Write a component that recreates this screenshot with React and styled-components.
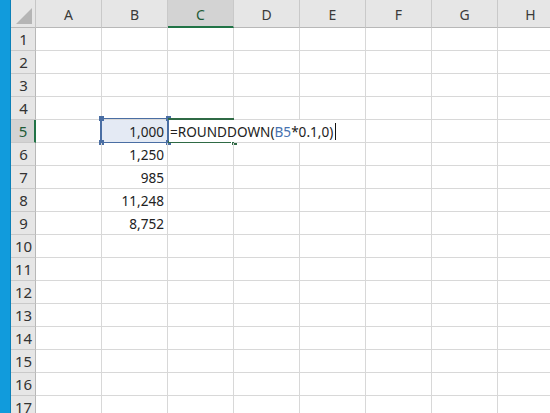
import React from "react";
import styled, { createGlobalStyle } from "styled-components";

const Global = createGlobalStyle`
  html, body { margin: 0; padding: 0; background: #fff; overflow: hidden; }
  body { font-family: "Noto Sans", "Noto Sans CJK JP", sans-serif; }
`;

const COLS = ["A", "B", "C", "D", "E", "F", "G", "H"];
const ROWS = Array.from({ length: 17 }, (_, i) => i + 1);

const data = { 5: "1,000", 6: "1,250", 7: "985", 8: "11,248", 9: "8,752" };

const Page = styled.div`
  display: flex;
  width: 550px;
  height: 413px;
  overflow: hidden;
`;

const Strip = styled.div`
  width: 10px;
  flex: none;
  background: #119bdc;
  border-right: 1px solid #0b80b8;
`;

const Sheet = styled.div`
  display: grid;
  grid-template-columns: 25px repeat(8, 66px);
  grid-template-rows: 28px repeat(17, 23px);
  flex: none;
  background: #fff;
`;

const Corner = styled.div`
  background: #e6e6e6;
  border-right: 1px solid #c6c6c6;
  border-bottom: 1px solid #b8b8b8;
  display: flex;
  align-items: flex-end;
  justify-content: flex-end;
  padding: 0 3px 3px 0;
  &::after {
    content: "";
    border-left: 16px solid transparent;
    border-bottom: 16px solid #b5b5b5;
  }
`;

const ColHead = styled.div`
  box-sizing: border-box;
  background: ${(p) => (p.$active ? "#d3d3d3" : "#e6e6e6")};
  border-right: 1px solid #c9c9c9;
  border-bottom: ${(p) => (p.$active ? "2px solid #217346" : "1px solid #b8b8b8")};
  display: flex;
  align-items: center;
  justify-content: center;
  color: ${(p) => (p.$active ? "#1e5b36" : "#3a3a3a")};
  font-size: 14px;
  padding-top: 2px;
`;

const RowHead = styled.div`
  box-sizing: border-box;
  background: ${(p) => (p.$active ? "#d3d3d3" : "#e6e6e6")};
  border-right: ${(p) => (p.$active ? "2px solid #217346" : "1px solid #b8b8b8")};
  border-bottom: 1px solid #c9c9c9;
  display: flex;
  align-items: center;
  justify-content: center;
  color: ${(p) => (p.$active ? "#1e5b36" : "#333")};
  font-size: 15px;
  padding-left: 1px;
`;

const Cell = styled.div`
  position: relative;
  box-sizing: border-box;
  border-right: 1px solid #d8d8d8;
  border-bottom: 1px solid #d8d8d8;
  background: ${(p) => (p.$ref ? "#e4eaf4" : "transparent")};
  display: flex;
  align-items: center;
  justify-content: ${(p) => (p.$left ? "flex-start" : "flex-end")};
  padding-right: 3px;
  font-size: 13.6px;
  color: #222;
  white-space: nowrap;
`;

const RefBox = styled.div`
  position: absolute;
  inset: -2px -2px -1px -2px;
  border: 1px solid #4a6ea3;
  border-left-width: 2px;
  border-right-width: 2px;
  pointer-events: none;
`;

const Handle = styled.span`
  position: absolute;
  width: 5px;
  height: 5px;
  background: #4a6ea3;
  left: ${(p) => (p.$x === "l" ? "-3.5px" : "auto")};
  right: ${(p) => (p.$x === "r" ? "-3.5px" : "auto")};
  top: ${(p) => (p.$y === "t" ? "-3px" : "auto")};
  bottom: ${(p) => (p.$y === "b" ? "-3px" : "auto")};
`;

const EditBox = styled.div`
  position: absolute;
  inset: -2px -1px -1px 0;
  border-top: 2px solid #2f6a45;
  border-bottom: 2px solid #2f6a45;
  pointer-events: none;
`;

const FillHandle = styled.span`
  position: absolute;
  right: -3px;
  bottom: -4px;
  width: 5px;
  height: 5px;
  background: #2f6a45;
  border-left: 1px solid #fff;
  border-top: 1px solid #fff;
`;

const Formula = styled.div`
  position: relative;
  z-index: 1;
  display: flex;
  align-items: center;
  align-self: stretch;
  margin-left: 1px;
  background: #fff;
  padding: 0 1px;
  white-space: nowrap;
`;

const RefText = styled.span`
  color: #4872b0;
`;

const Caret = styled.span`
  display: inline-block;
  width: 1px;
  height: 17px;
  background: #111;
  margin-left: 2px;
`;

export default function App() {
  const cells = [];
  cells.push(<Corner key="corner" />);
  COLS.forEach((c) => cells.push(<ColHead key={c} $active={c === "C"}>{c}</ColHead>));
  ROWS.forEach((r) => {
    cells.push(
      <RowHead key={"r" + r} $active={r === 5}>
        {r}
      </RowHead>
    );
    COLS.forEach((c) => {
      const isRef = c === "B" && r === 5;
      const isEdit = c === "C" && r === 5;
      cells.push(
        <Cell key={c + r} $ref={isRef} $left={isEdit}>
          {c === "B" ? data[r] : null}
          {isRef && (
            <RefBox>
              <Handle $x="l" $y="t" />
              <Handle $x="r" $y="t" />
              <Handle $x="l" $y="b" />
              <Handle $x="r" $y="b" />
            </RefBox>
          )}
          {isEdit && (
            <>
              <EditBox>
                <FillHandle />
              </EditBox>
              <Formula>
                =ROUNDDOWN(<RefText>B5</RefText>*0.1,0)
                <Caret />
              </Formula>
            </>
          )}
        </Cell>
      );
    });
  });

  return (
    <>
      <Global />
      <Page>
        <Strip />
        <Sheet>{cells}</Sheet>
      </Page>
    </>
  );
}
